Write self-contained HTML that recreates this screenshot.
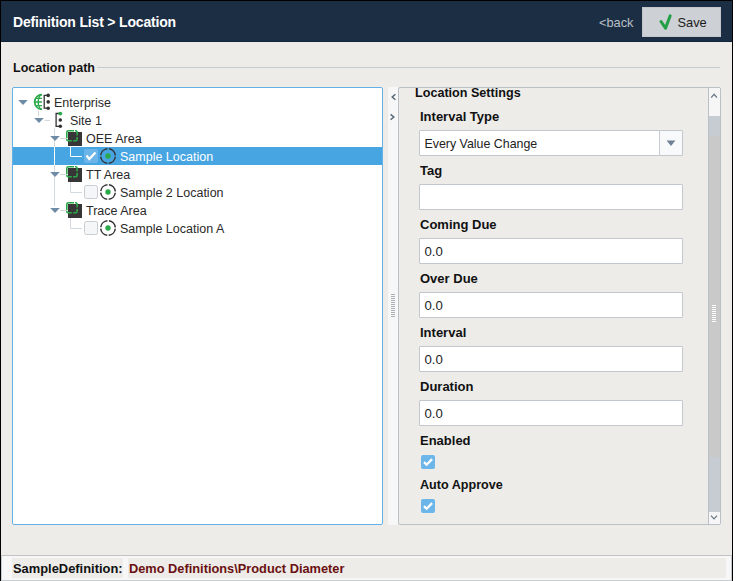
<!DOCTYPE html>
<html><head><meta charset="utf-8">
<style>
*{margin:0;padding:0;box-sizing:border-box}
html,body{width:736px;height:581px;overflow:hidden;background:#fff;font-family:"Liberation Sans",sans-serif}
.a{position:absolute}
#frame{position:absolute;left:0;top:0;width:733px;height:581px;background:#edece9;border-left:1px solid #000;border-top:1px solid #000;border-right:1px solid #000}
#hdr{position:absolute;left:1px;top:1px;width:731px;height:41px;background:#1c2e43;border-bottom:1px solid #10243a}
.t{position:absolute;white-space:nowrap;line-height:1}
.lbl{font-weight:bold;font-size:13px;color:#111}
.inp{position:absolute;left:419px;width:264px;height:26px;background:#fff;border:1px solid #c3c8ce;border-radius:1px}
.val{position:absolute;left:4.5px;top:7px;font-size:12.4px;color:#222;line-height:1}
.cb{position:absolute;width:14px;height:14px;border-radius:2px;background:#6db6e9}
.row{position:absolute;left:13px;width:369px;height:18px}
.tx{position:absolute;font-size:12.5px;color:#2a2a2a;line-height:1;white-space:nowrap}
</style></head><body>
<div id="frame"></div>
<div id="hdr"></div>
<div class="t" style="left:13px;top:15px;font-size:14px;letter-spacing:-0.18px;font-weight:bold;color:#fff">Definition List &gt; Location</div>
<div class="t" style="left:599px;top:17px;font-size:12.8px;color:#b9c0c8">&lt;back</div>
<div class="a" style="left:642px;top:7px;width:79px;height:30px;background:#cdd0d4;border:1px solid #c3c7cc"></div>
<svg class="a" style="left:658px;top:13px" width="16" height="18" viewBox="0 0 16 18"><path d="M3 8.5 L7.5 15.2 L12.2 2.8" fill="none" stroke="#22a047" stroke-width="3" stroke-linecap="round" stroke-linejoin="round"/></svg>
<div class="t" style="left:677.5px;top:17px;font-size:12.8px;color:#1b1b1b">Save</div>

<div class="t lbl" style="left:13px;top:62px;font-size:12.5px">Location path</div>
<div class="a" style="left:97px;top:67px;width:623px;height:1px;background:#c6cbd1"></div>

<!-- tree -->
<div class="a" style="left:12px;top:87px;width:371px;height:438px;background:#fff;border:1px solid #64b1e8;border-radius:2px"></div>
<div class="row" style="top:147px;background:#47a5e2"></div>
<svg class="a" style="left:0;top:0" width="400" height="240" viewBox="0 0 400 240"><path d="M38.5 110.5V116M44.5 120.5H50M54.5 128.5V206M60 138.5H66M60 174.5H66M60 210.5H66" fill="none" stroke="#d2d9df" stroke-width="1"/><path d="M54.5 147V165" stroke="#fff" stroke-width="1"/><path d="M18.2 100H27.8L23 105Z" fill="#6f8ca7"/><path d="M42 94.6A7.4 7.4 0 0 0 42 109.4" fill="none" stroke="#2aa84a" stroke-width="1.7"/><path d="M42 94.6A3.8 7.4 0 0 0 42 109.4" fill="none" stroke="#2aa84a" stroke-width="1.4"/><path d="M35.5 98.3H42M34.6 102H42M35.5 105.7H42" stroke="#2aa84a" stroke-width="1.3"/><path d="M48.2 95.4H44.2V108.2H48.2" fill="none" stroke="#333" stroke-width="1.3"/><circle cx="48.2" cy="95.4" r="1.8" fill="#333"/><circle cx="48.2" cy="101.9" r="1.8" fill="#333"/><circle cx="48.2" cy="108.2" r="1.8" fill="#333"/><path d="M34.2 118H43.8L39 123Z" fill="#6f8ca7"/><path d="M60.3 113.5H56.1V126.3H60.3" fill="none" stroke="#333" stroke-width="1.3"/><circle cx="60.3" cy="113.6" r="1.9" fill="#2aa84a"/><circle cx="60.3" cy="120" r="1.8" fill="#333"/><circle cx="60.3" cy="126.2" r="1.8" fill="#333"/><path d="M50.2 136H59.8L55 141Z" fill="#6f8ca7"/><rect x="68" y="132" width="14" height="14" fill="#383536"/><path d="M66.8 138.3V132.2Q66.8 130.8 68.2 130.8H74M75 130.8H75.7Q77.1 130.8 77.1 132.2V135.4M77.1 137.1V139.3Q77.1 140.7 75.7 140.7H73.1M71.9 140.7H68.2Q66.8 140.7 66.8 139.3V139.0" fill="none" stroke="#2aa84a" stroke-width="1.6"/><path d="M70.5 146V156.5H82" fill="none" stroke="#fff" stroke-width="1"/><rect x="84" y="149" width="14" height="14" rx="2" fill="#6cb5e9"/><path d="M86.5 155.5L89.3 159L95.5 152.5" fill="none" stroke="#fff" stroke-width="2.2"/><circle cx="108" cy="156" r="7.3" fill="none" stroke="#333" stroke-width="1.5" stroke-dasharray="9.97 1.5" stroke-dashoffset="-0.75"/><circle cx="108" cy="156" r="2.7" fill="#2aa84a"/><path d="M50.2 172H59.8L55 177Z" fill="#6f8ca7"/><rect x="68" y="168" width="14" height="14" fill="#383536"/><path d="M66.8 174.3V168.2Q66.8 166.8 68.2 166.8H74M75 166.8H75.7Q77.1 166.8 77.1 168.2V171.4M77.1 173.1V175.3Q77.1 176.7 75.7 176.7H73.1M71.9 176.7H68.2Q66.8 176.7 66.8 175.3V175.0" fill="none" stroke="#2aa84a" stroke-width="1.6"/><path d="M70.5 182V192.5H82" fill="none" stroke="#d2d9df" stroke-width="1"/><rect x="84.5" y="185.5" width="13" height="13" rx="2" fill="#f4f6f8" stroke="#c9cdd2"/><circle cx="108" cy="192" r="7.3" fill="none" stroke="#333" stroke-width="1.5" stroke-dasharray="9.97 1.5" stroke-dashoffset="-0.75"/><circle cx="108" cy="192" r="2.7" fill="#2aa84a"/><path d="M50.2 208H59.8L55 213Z" fill="#6f8ca7"/><rect x="68" y="204" width="14" height="14" fill="#383536"/><path d="M66.8 210.3V204.2Q66.8 202.8 68.2 202.8H74M75 202.8H75.7Q77.1 202.8 77.1 204.2V207.4M77.1 209.1V211.3Q77.1 212.7 75.7 212.7H73.1M71.9 212.7H68.2Q66.8 212.7 66.8 211.3V211.0" fill="none" stroke="#2aa84a" stroke-width="1.6"/><path d="M70.5 218V228.5H82" fill="none" stroke="#d2d9df" stroke-width="1"/><rect x="84.5" y="221.5" width="13" height="13" rx="2" fill="#f4f6f8" stroke="#c9cdd2"/><circle cx="108" cy="228" r="7.3" fill="none" stroke="#333" stroke-width="1.5" stroke-dasharray="9.97 1.5" stroke-dashoffset="-0.75"/><circle cx="108" cy="228" r="2.7" fill="#2aa84a"/></svg>
<div class="tx" style="left:54px;top:97px">Enterprise</div>
<div class="tx" style="left:70px;top:115px">Site 1</div>
<div class="tx" style="left:86px;top:133px">OEE Area</div>
<div class="tx" style="left:120px;top:151px;color:#fff">Sample Location</div>
<div class="tx" style="left:86px;top:169px">TT Area</div>
<div class="tx" style="left:120px;top:187px">Sample 2 Location</div>
<div class="tx" style="left:86px;top:205px">Trace Area</div>
<div class="tx" style="left:120px;top:223px">Sample Location A</div>

<!-- splitter -->
<div class="a" style="left:388px;top:87px;width:10px;height:438px;background:#f7f7f7"></div>

<!-- right panel -->
<div class="a" style="left:398px;top:87px;width:323px;height:438px;background:#edece9;border:1px solid #b9c0c8;border-radius:2px"></div>
<div class="a" style="left:708px;top:88px;width:12px;height:436px;background:#c6ccd1;border-left:1px solid #b9c0c8"></div>
<div class="a" style="left:709px;top:136px;width:11px;height:321px;background:#c9c9ca"></div>
<div class="a" style="left:709px;top:88px;width:11px;height:28px;background:#f6f6f6"></div>
<div class="a" style="left:709px;top:512px;width:11px;height:12px;background:#f6f6f6"></div>

<div class="t lbl" style="left:415px;top:87px;font-size:12.6px">Location Settings</div>
<div class="t lbl" style="left:420px;top:110px">Interval Type</div>
<div class="inp" style="top:130px"><div class="val">Every Value Change</div></div>
<div class="t lbl" style="left:420px;top:164px">Tag</div>
<div class="inp" style="top:184px"></div>
<div class="t lbl" style="left:420px;top:218px">Coming Due</div>
<div class="inp" style="top:238px"><div class="val" style="font-size:13.2px;top:6px">0.0</div></div>
<div class="t lbl" style="left:420px;top:272px">Over Due</div>
<div class="inp" style="top:292px"><div class="val" style="font-size:13.2px;top:6px">0.0</div></div>
<div class="t lbl" style="left:420px;top:326px">Interval</div>
<div class="inp" style="top:346px"><div class="val" style="font-size:13.2px;top:6px">0.0</div></div>
<div class="t lbl" style="left:420px;top:380px">Duration</div>
<div class="inp" style="top:400px"><div class="val" style="font-size:13.2px;top:6px">0.0</div></div>
<div class="t lbl" style="left:420px;top:434px">Enabled</div>
<div class="cb" style="left:421px;top:455px"><svg class="a" style="left:0;top:0" width="14" height="14"><path d="M3 7.1L5.6 9.7L11.1 4.1" fill="none" stroke="#fff" stroke-width="2.3"/></svg></div>
<div class="t lbl" style="left:420px;top:479px;font-size:12.6px">Auto Approve</div>
<div class="cb" style="left:421px;top:499px"><svg class="a" style="left:0;top:0" width="14" height="14"><path d="M3 7.1L5.6 9.7L11.1 4.1" fill="none" stroke="#fff" stroke-width="2.3"/></svg></div>


<!-- extras -->
<div class="a" style="left:659px;top:131px;width:23px;height:24px;background:#f8f9fb;border-left:1px solid #c8cdd3"></div>
<svg class="a" style="left:0;top:0" width="736" height="581" viewBox="0 0 736 581">
<path d="M395.4 94.2L392.2 97L395.4 99.8M390.6 114.4L393.8 117L390.6 119.7" fill="none" stroke="#56687a" stroke-width="1.5"/>
<path d="M391 294.5H395M391 296.5H395M391 298.5H395M391 300.5H395M391 302.5H395M391 304.5H395M391 306.5H395M391 308.5H395M391 310.5H395M391 312.5H395M391 314.5H395M391 316.5H395" stroke="#aab0b6" stroke-width="1"/>
<path d="M666.6 140.5H675.4L671 146Z" fill="#6e8195"/>
<path d="M711.2 97.6L714.1 94.3L717 97.6M711 515.6L714 518.9L717 515.6" fill="none" stroke="#6a7886" stroke-width="1.25"/>
<path d="M712 305.5H716M712 307.5H716M712 309.5H716M712 311.5H716M712 313.5H716M712 315.5H716M712 317.5H716M712 319.5H716M712 321.5H716" stroke="#fff" stroke-width="1"/>
</svg>

<!-- footer -->
<div class="a" style="left:1px;top:555px;width:731px;height:26px;background:#f7f7f7;border:1px solid #c7ccd1;border-top-color:#c2c2c2"></div>
<div class="a" style="left:12px;top:558px;width:111px;height:20px;background:#edece9"></div>
<div class="a" style="left:128px;top:558px;width:598px;height:20px;background:#edece9"></div>
<div class="t lbl" style="left:13px;top:562.5px;font-size:12.9px">SampleDefinition:</div>
<div class="t lbl" style="left:129px;top:562.5px;font-size:12.8px;color:#6a1010">Demo Definitions\Product Diameter</div>
</body></html>
